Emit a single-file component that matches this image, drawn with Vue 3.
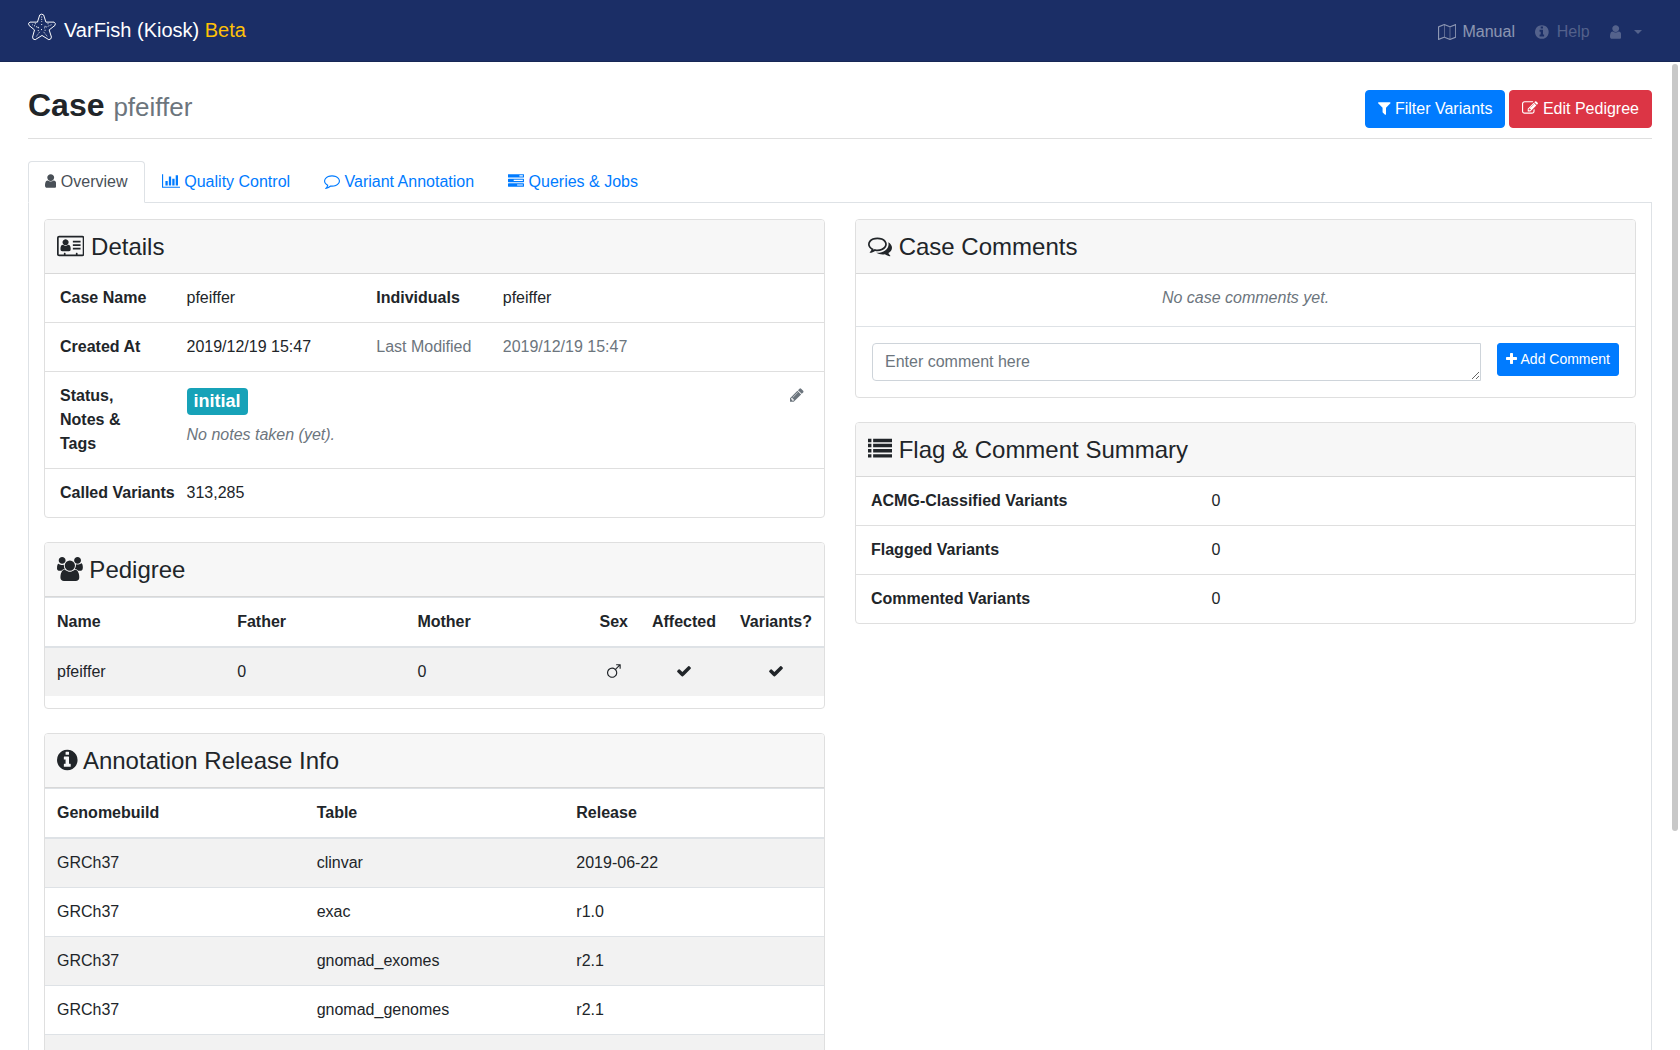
<script setup>
import { h, ref } from 'vue'

const icons = {
  user: ['256 0 1280 1792', 'M1536 1399q0 109-62.5 187t-150.5 78h-854q-88 0-150.5-78t-62.5-187q0-85 8.5-160.5t31.5-152 58.5-131 94-89 134.5-34.5q131 128 313 128t313-128q76 0 134.5 34.5t94 89 58.5 131 31.5 152 8.5 160.5zm-256-887q0 159-112.5 271.5t-271.5 112.5-271.5-112.5-112.5-271.5 112.5-271.5 271.5-112.5 271.5 112.5 112.5 271.5z'],
  info: ['128 0 1536 1792', 'M1152 1376v-160q0-14-9-23t-23-9h-96v-512q0-14-9-23t-23-9h-320q-14 0-23 9t-9 23v160q0 14 9 23t23 9h96v320h-96q-14 0-23 9t-9 23v160q0 14 9 23t23 9h448q14 0 23-9t9-23zm-128-896v-160q0-14-9-23t-23-9h-192q-14 0-23 9t-9 23v160q0 14 9 23t23 9h192q14 0 23-9t9-23zm640 416q0 209-103 385.5t-279.5 279.5-385.5 103-385.5-103-279.5-279.5-103-385.5 103-385.5 279.5-279.5 385.5-103 385.5 103 279.5 279.5 103 385.5z'],
  filter: ['192 0 1408 1792', 'M1595 295q17 41-14 70l-493 493v742q0 42-39 59-13 5-25 5-27 0-45-19l-256-256q-19-19-19-45v-486l-493-493q-31-29-14-70 17-39 59-39h1280q42 0 59 39z'],
  edit: ['0 0 1792 1792', 'M888 1184l116-116-152-152-116 116v56h96v96h56zm440-720q-16-16-33 1l-350 350q-17 17-1 33t33-1l350-350q17-17 1-33zm80 594v190q0 119-84.5 203.5t-203.5 84.5h-832q-119 0-203.5-84.5t-84.5-203.5v-832q0-119 84.5-203.5t203.5-84.5h832q63 0 117 25 15 7 18 23 3 17-9 29l-49 49q-14 14-32 8-23-6-45-6h-832q-66 0-113 47t-47 113v832q0 66 47 113t113 47h832q66 0 113-47t47-113v-126q0-13 9-22l64-64q15-15 35-7t20 29zm-96-738l288 288-672 672h-288v-288zm444 132l-92 92-288-288 92-92q28-28 68-28t68 28l152 152q28 28 28 68t-28 68z'],
  chart: ['0 0 2048 1792', 'M640 896v512h-256v-512h256zm384-512v1024h-256v-1024h256zm1024 1152v128h-2048v-1536h128v1408h1920zm-640-896v768h-256v-768h256zm384-384v1152h-256v-1152h256z'],
  comment: ['0 0 1792 1792', 'M896 384q-204 0-381.5 69.5t-282 187.5-104.5 255q0 112 71.5 213.5t201.5 175.5l87 50-27 96q-24 91-70 172 152-63 275-171l43-38 57 6q69 8 130 8 204 0 381.5-69.5t282-187.5 104.5-255-104.5-255-282-187.5-381.5-69.5zm896 512q0 174-120 321.5t-326 233-450 85.5q-70 0-145-8-198 175-460 242-49 14-114 22h-5q-15 0-27-10.5t-16-27.5v-1q-3-4-.5-12t2-10 4.5-9.5l6-9 7-8.5 8-9q7-8 31-34.5t34.5-38 31-39.5 32.5-51 27-59 26-76q-157-89-247.5-220t-90.5-281q0-174 120-321.5t326-233 450-85.5 450 85.5 326 233 120 321.5z'],
  tasks: ['0 0 1792 1792', 'M1024 1408h640v-128h-640v128zm-384-512h1024v-128h-1024v128zm640-512h384v-128h-384v128zm512 832v256q0 26-19 45t-45 19h-1664q-26 0-45-19t-19-45v-256q0-26 19-45t45-19h1664q26 0 45 19t19 45zm0-512v256q0 26-19 45t-45 19h-1664q-26 0-45-19t-19-45v-256q0-26 19-45t45-19h1664q26 0 45 19t19 45zm0-512v256q0 26-19 45t-45 19h-1664q-26 0-45-19t-19-45v-256q0-26 19-45t45-19h1664q26 0 45 19t19 45z'],
  card: ['0 0 2048 1792', 'M160 128h1728a160 160 0 0 1 160 160v1216a160 160 0 0 1-160 160h-1728a160 160 0 0 1-160-160v-1216a160 160 0 0 1 160-160zM160 256a32 32 0 0 0-32 32v1216a32 32 0 0 0 32 32h352v-96a32 32 0 0 1 32-32h64a32 32 0 0 1 32 32v96h768v-96a32 32 0 0 1 32-32h64a32 32 0 0 1 32 32v96h352a32 32 0 0 0 32-32v-1216a32 32 0 0 0-32-32zM640 384a226 226 0 1 0 .1 0zM453 804q90 86 187 86t187-86q197 0 197 327 0 149-128 149h-512q-128 0-128-149 0-327 197-327zM1184 1024h576v128h-576zM1184 768h576v128h-576zM1184 512h576v128h-576z'],
  users: ['0 0 1920 1792', 'M593 896q-162 5-265 128h-134q-82 0-138-40.5t-56-118.5q0-353 124-353 6 0 43.5 21t97.5 42.5 119 21.5q67 0 133-23-5 37-5 66 0 159 93 293zm1071 637q0 120-73 189.5t-194 69.5h-874q-121 0-194-69.5t-73-189.5q0-53 3.5-103.5t14-109 26.5-108.5 43-97.5 62-81 85.5-53.5 111.5-20q10 0 43 21.5t73 48 107 48 135 21.5 135-21.5 107-48 73-48 43-21.5q61 0 111.5 20t85.5 53.5 62 81 43 97.5 26.5 108.5 14 109 3.5 103.5zm-1024-1277q0 106-75 181t-181 75-181-75-75-181 75-181 181-75 181 75 75 181zm704 384q0 159-112.5 271.5t-271.5 112.5-271.5-112.5-112.5-271.5 112.5-271.5 271.5-112.5 271.5 112.5 112.5 271.5zm576 225q0 78-56 118.5t-138 40.5h-134q-103-123-265-128 93-134 93-293 0-29-5-66 66 23 133 23 59 0 119-21.5t97.5-42.5 43.5-21q124 0 124 353zm-128-609q0 106-75 181t-181 75-181-75-75-181 75-181 181-75 181 75 75 181z'],
  comments: ['0 0 1792 1792', 'M704 384q-153 0-286 52t-211.5 141-78.5 191q0 82 53 158t149 132l97 56-35 84q34-20 62-39l44-31 53 10q78 14 153 14 153 0 286-52t211.5-141 78.5-191-78.5-191-211.5-141-286-52zm0-128q191 0 353.5 68.5t256.5 186.5 94 257-94 257-256.5 186.5-353.5 68.5q-86 0-176-16-124 88-278 128-36 9-86 16h-3q-11 0-20.5-8t-11.5-21q-1-3-1-6.5t.5-6.5 2-6l2.5-5 3.5-5.5 4-5 4.5-5 4-4.5q5-6 23-25t26-29.5 22.5-29 25-38.5 20.5-44q-124-72-195-177t-71-224q0-139 94-257t256.5-186.5 353.5-68.5zm822 1169q10 24 20.5 44t25 38.5 22.5 29 26 29.5 23 25q1 1 4 4.5t4.5 5 4 5 3.5 5.5l2.5 5 2 6 .5 6.5-1 6.5q-3 14-13 22t-22 7q-50-7-86-16-154-40-278-128-90 16-176 16-271 0-472-132 58 4 88 4 161 0 309-45t264-129q125-92 192-212t67-254q0-77-23-152 129 71 204 178t75 230q0 120-71 224.5t-195 176.5z'],
  list: ['0 0 1792 1792', 'M0 128h256v256h-256zM384 128h1408v256h-1408zM0 512h256v256h-256zM384 512h1408v256h-1408zM0 896h256v256h-256zM384 896h1408v256h-1408zM0 1280h256v256h-256zM384 1280h1408v256h-1408z'],
  map: ['0 0 2048 1792', 'M2020 11q28 20 28 53v1408q0 20-11 36t-29 23l-640 256q-24 11-48 0l-616-246-616 246q-10 5-24 5-19 0-36-11-28-20-28-53v-1408q0-20 11-36t29-23l640-256q24-11 48 0l616 246 616-246q32-13 60 6zm-1284 135v1270l576 230v-1270zm-608 217v1270l544-217v-1270zm1792 1066v-1270l-544 217v1270z'],
  pencil: ['128 0 1536 1792', 'M491 1536l91-91-235-235-91 91v107h128v128h107zm523-928q0-22-22-22-10 0-17 7l-542 542q-7 7-7 17 0 22 22 22 10 0 17-7l542-542q7-7 7-17zm-54-192l416 416-832 832h-416v-416zm683 96q0 53-37 90l-166 166-416-416 166-165q36-38 90-38 53 0 91 38l235 234q37 39 37 91z'],
  check: ['0 0 1792 1792', 'M1671 566q0 40-28 68l-724 724-136 136q-28 28-68 28t-68-28l-136-136-362-362q-28-28-28-68t28-68l136-136q28-28 68-28t68 28l294 295 656-657q28-28 68-28t68 28l136 136q28 28 28 68z'],
  plus: ['192 0 1408 1792', 'M1600 736v192q0 40-28 68t-68 28h-416v416q0 40-28 68t-68 28h-192q-40 0-68-28t-28-68v-416h-416q-40 0-68-28t-28-68v-192q0-40 28-68t68-28h416v-416q0-40 28-68t68-28h192q40 0 68 28t28 68v416h416q40 0 68 28t28 68z'],
  mars: ['0 0 1536 1792', 'M1472 128q26 0 45 19t19 45v416q0 14-9 23t-23 9h-64q-14 0-23-9t-9-23v-262l-382 383q126 156 126 359 0 117-45.5 223.5t-123 184-184 123-223.5 45.5-223.5-45.5-184-123-123-184-45.5-223.5 45.5-223.5 123-184 184-123 223.5-45.5q203 0 359 126l382-382h-261q-14 0-23-9t-9-23v-64q0-14 9-23t23-9h416zm-896 1408q185 0 316.5-131.5t131.5-316.5-131.5-316.5-316.5-131.5-316.5 131.5-131.5 316.5 131.5 316.5 316.5 131.5z'],
}

const Icon = (props) =>
  h('svg', { class: 'icon', viewBox: icons[props.name][0], 'aria-hidden': 'true' }, [
    h('path', { d: icons[props.name][1], 'fill-rule': props.name === 'card' ? 'evenodd' : 'nonzero' }),
  ])
Icon.props = ['name']

const tabs = [
  { icon: 'user', label: 'Overview' },
  { icon: 'chart', label: 'Quality Control' },
  { icon: 'comment', label: 'Variant Annotation' },
  { icon: 'tasks', label: 'Queries & Jobs' },
]
const activeTab = ref('Overview')

const summary = ['ACMG-Classified Variants', 'Flagged Variants', 'Commented Variants']

const releases = [
  ['GRCh37', 'clinvar', '2019-06-22'],
  ['GRCh37', 'exac', 'r1.0'],
  ['GRCh37', 'gnomad_exomes', 'r2.1'],
  ['GRCh37', 'gnomad_genomes', 'r2.1'],
  ['', '', ''],
]
const comment = ref('')
</script>

<template>
  <div class="app">
    <header class="navbar">
      <a class="brand" href="#">
        <svg class="logo" viewBox="83 40 86 84" aria-hidden="true">
          <path d="M119 45q6-5 12 0L138 67L163 67q6 3 3 10L148 91L155 113q-1 8-8 8L126 108L105 121q-8 0-8-8L103 91L86 77q-4-8 3-10L112 67Z" />
          <path class="dots" d="M125 50V66M125 73V77M117 85L96 75M133 85L155 75M119 97L108 112M131 97L143 112M112 83h5M134 92h5M123 90h5M113 93h4M134 80h4M104 72h4M143 72h4" />
        </svg>
        <span>VarFish (Kiosk) <span class="beta">Beta</span></span>
      </a>
      <nav class="top-links">
        <a class="top-link" href="#"><Icon name="map" /><span>Manual</span></a>
        <a class="top-link muted-link wide" href="#"><Icon name="info" /><span>Help</span></a>
        <a class="top-link muted-link account" href="#" aria-label="Account"><Icon name="user" /><span class="caret"></span></a>
      </nav>
    </header>

    <main class="page">
      <div class="page-head">
        <h1>Case <small>pfeiffer</small></h1>
        <div class="actions">
          <button class="btn primary" type="button"><Icon name="filter" /> Filter Variants</button>
          <button class="btn danger" type="button"><Icon name="edit" /> Edit Pedigree</button>
        </div>
      </div>

      <nav class="tabs">
        <a
          v-for="tab in tabs"
          :key="tab.label"
          class="tab"
          :class="{ active: tab.label === activeTab }"
          href="#"
          @click.prevent="activeTab = tab.label"
        ><Icon :name="tab.icon" /> {{ tab.label }}</a>
      </nav>

      <div class="tab-content">
        <div class="column">
          <section class="card">
            <h2><Icon name="card" /> Details</h2>
            <div class="detail-row">
              <strong>Case Name</strong><span>pfeiffer</span>
              <strong>Individuals</strong><span>pfeiffer</span>
            </div>
            <div class="detail-row">
              <strong>Created At</strong><span>2019/12/19 15:47</span>
              <span class="muted">Last Modified</span><span class="muted">2019/12/19 15:47</span>
            </div>
            <div class="detail-row">
              <strong>Status, Notes &amp; Tags</strong>
              <div class="status">
                <span class="badge">initial</span>
                <em class="muted">No notes taken (yet).</em>
              </div>
              <button class="edit-status" type="button" aria-label="Edit status"><Icon name="pencil" /></button>
            </div>
            <div class="detail-row">
              <strong class="nowrap">Called Variants</strong><span>313,285</span>
            </div>
          </section>

          <section class="card padded">
            <h2><Icon name="users" /> Pedigree</h2>
            <table class="pedigree">
              <thead>
                <tr>
                  <th class="third">Name</th>
                  <th class="third">Father</th>
                  <th class="third">Mother</th>
                  <th class="mark">Sex</th>
                  <th class="mark">Affected</th>
                  <th class="mark">Variants?</th>
                </tr>
              </thead>
              <tbody>
                <tr>
                  <td>pfeiffer</td>
                  <td>0</td>
                  <td>0</td>
                  <td class="mark"><Icon name="mars" /></td>
                  <td class="mark"><Icon name="check" /></td>
                  <td class="mark"><Icon name="check" /></td>
                </tr>
              </tbody>
            </table>
          </section>

          <section class="card padded">
            <h2><Icon name="info" /> Annotation Release Info</h2>
            <table class="releases">
              <thead>
                <tr><th>Genomebuild</th><th>Table</th><th>Release</th></tr>
              </thead>
              <tbody>
                <tr v-for="(row, i) in releases" :key="i">
                  <td v-for="(cell, j) in row" :key="j">{{ cell }}</td>
                </tr>
              </tbody>
            </table>
          </section>
        </div>

        <div class="column">
          <section class="card">
            <h2><Icon name="comments" /> Case Comments</h2>
            <p class="empty muted">No case comments yet.</p>
            <form class="comment-form" @submit.prevent>
              <textarea v-model="comment" rows="1" placeholder="Enter comment here" aria-label="Comment"></textarea>
              <button class="btn primary small" type="submit"><Icon name="plus" /> Add Comment</button>
            </form>
          </section>

          <section class="card">
            <h2><Icon name="list" /> Flag &amp; Comment Summary</h2>
            <div v-for="label in summary" :key="label" class="summary-row">
              <strong>{{ label }}</strong><span>0</span>
            </div>
          </section>
        </div>
      </div>
    </main>
    <div class="scroll-thumb"></div>
  </div>
</template>

<style>
body {
  margin: 0;
  background: #fff;
}
</style>

<style scoped>
* {
  box-sizing: border-box;
}
.app {
  display: flex;
  flex-direction: column;
  height: 100vh;
  color: #212529;
  font: 16px/24px "Liberation Sans", Arial, sans-serif;
}
a {
  text-decoration: none;
}
.icon {
  height: 1em;
  vertical-align: -2px;
  fill: currentColor;
}

.navbar {
  display: flex;
  flex: none;
  align-items: center;
  justify-content: space-between;
  height: 62px;
  padding: 0 28px;
  background: #1b2e66;
  border-bottom: 1px solid #172755;
}
.brand {
  display: flex;
  gap: 8px;
  padding-bottom: 2px;
  color: #fff;
  font-size: 20px;
  line-height: 30px;
}
.logo {
  width: 28px;
  height: 28px;
  margin-top: -2px;
  fill: none;
  stroke: #fff;
  stroke-width: 3;
}
.logo .dots {
  stroke-dasharray: 3 4;
  stroke-width: 3;
}
.beta {
  color: #ffc107;
}
.top-links {
  display: flex;
  gap: 20px;
  padding: 2px 10px 0 0;
}
.top-link {
  display: flex;
  align-items: center;
  gap: 6px;
  color: rgba(255, 255, 255, 0.5);
}
.top-link.wide {
  gap: 8px;
}
.top-link.account {
  gap: 13px;
}
.muted-link {
  color: rgba(255, 255, 255, 0.25);
}
.caret {
  border: 4px solid transparent;
  border-top-color: currentColor;
  border-bottom: 0;
}

.page {
  flex: 1;
  min-height: 0;
  padding: 24px 28px;
  overflow-y: auto;
  scrollbar-width: none;
}
.page-head {
  display: flex;
  align-items: flex-end;
  justify-content: space-between;
  padding-bottom: 10px;
  border-bottom: 1px solid #dfdfdf;
}
h1 {
  margin: 0 0 4px;
  font-size: 32px;
  line-height: 38px;
}
h1 small {
  color: #6c757d;
  font-size: 26px;
  font-weight: 400;
  line-height: 24px;
}
.actions {
  display: flex;
  gap: 4px;
}
.btn {
  padding: 6px 12px;
  color: #fff;
  border: 1px solid;
  border-radius: 4px;
  font: inherit;
  white-space: nowrap;
}
.btn.primary {
  background: #007bff;
  border-color: #007bff;
}
.btn.danger {
  background: #dc3545;
  border-color: #dc3545;
}
.btn.small {
  padding: 4px 8px;
  font-size: 14px;
  line-height: 23px;
  border-radius: 3px;
}

.tabs {
  display: flex;
  margin-top: 22px;
  border-bottom: 1px solid #dee2e6;
}
.tab {
  margin-bottom: -1px;
  padding: 8px 16px;
  color: #007bff;
  border: 1px solid transparent;
  border-radius: 4px 4px 0 0;
}
.tab.active {
  color: #495057;
  background: #fff;
  border-color: #dee2e6 #dee2e6 #fff;
}
.tab-content {
  display: grid;
  grid-template-columns: 1fr 1fr;
  gap: 30px;
  padding: 16px 15px;
  border: solid #dee2e6;
  border-width: 0 1px 1px;
}
.column {
  display: flex;
  flex-direction: column;
  gap: 24px;
  min-width: 0;
}
.card {
  border: 1px solid #dfdfdf;
  border-radius: 4px;
  overflow: hidden;
}
.card.padded {
  padding-bottom: 12px;
}
h2 {
  margin: 0;
  padding: 12px;
  background: #f7f7f7;
  border-bottom: 1px solid #d8d8d8;
  font-size: 24px;
  font-weight: 400;
  line-height: 29px;
}
h2 .icon {
  vertical-align: -3px;
}
.muted {
  color: #6c757d;
}

.detail-row {
  display: grid;
  grid-template-columns: minmax(0, 2fr) minmax(0, 3fr) minmax(0, 2fr) minmax(0, 5fr);
  padding: 12px 5px 12px 15px;
}
.detail-row + .detail-row,
.summary-row + .summary-row {
  border-top: 1px solid #dfdfdf;
}
.detail-row > strong {
  padding-right: 30px;
}
.nowrap {
  white-space: nowrap;
}
.status {
  display: flex;
  flex-direction: column;
  align-items: flex-start;
  gap: 8px;
  padding-top: 4px;
}
.badge {
  padding: 0 7px;
  color: #fff;
  background: #17a2b8;
  border-radius: 4px;
  font-size: 18px;
  font-weight: 700;
  line-height: 27px;
}
.edit-status {
  grid-column: 4;
  align-self: start;
  justify-self: end;
  margin-right: 15px;
  padding: 0;
  color: #6c757d;
  background: none;
  border: 0;
  font: inherit;
}

table {
  width: 100%;
  border-collapse: separate;
  border-spacing: 0;
}
th,
td {
  height: 49px;
  padding: 12px;
  text-align: left;
  border-top: 1px solid #dee2e6;
}
th {
  border-bottom: 2px solid #dee2e6;
}
tbody tr:first-child td {
  height: 48px;
  border-top: 0;
}
tbody tr:nth-child(odd) {
  background: #f2f2f2;
}
.third {
  width: 33%;
}
th.mark,
td.mark {
  text-align: center;
  white-space: nowrap;
}
.releases {
  table-layout: fixed;
}

.empty {
  margin: 0;
  padding: 12px 16px 16px;
  font-style: italic;
  text-align: center;
}
.comment-form {
  display: flex;
  align-items: flex-start;
  gap: 16px;
  padding: 16px;
  border-top: 1px solid #dee2e6;
}
textarea {
  flex: 1;
  height: 38px;
  padding: 6px 12px;
  color: #495057;
  border: 1px solid #ced4da;
  border-radius: 4px 0 0 4px;
  font: inherit;
}
textarea::placeholder {
  color: #6c757d;
}
.summary-row {
  display: grid;
  grid-template-columns: 5fr 6fr;
  padding: 12px 15px;
}

.scroll-thumb {
  position: fixed;
  top: 64px;
  right: 2px;
  width: 6px;
  height: 73vh;
  background: #c8c8c8;
  border-radius: 3px;
}
</style>
